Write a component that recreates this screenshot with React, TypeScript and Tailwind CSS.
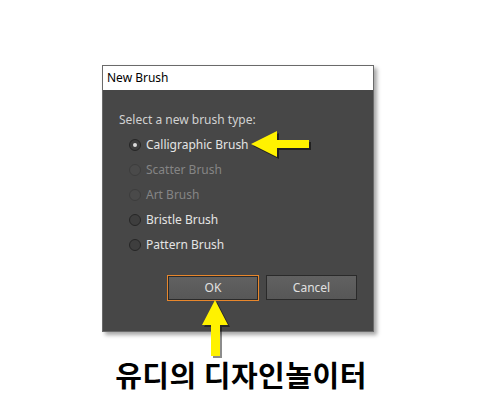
import React from "react";

const options = [
  { label: "Calligraphic Brush", checked: true, disabled: false },
  { label: "Scatter Brush", checked: false, disabled: true },
  { label: "Art Brush", checked: false, disabled: true },
  { label: "Bristle Brush", checked: false, disabled: false },
  { label: "Pattern Brush", checked: false, disabled: false },
];

function Radio({ checked, disabled }: { checked: boolean; disabled: boolean }) {
  return (
    <span
      className={`flex h-[12px] w-[12px] items-center justify-center rounded-full border ${
        disabled ? "border-[#3d3d3d] bg-[#4a4a4a]" : "border-[#262626] bg-[#3e3e3e]"
      }`}
    >
      {checked && <span className="h-[4px] w-[4px] rounded-full bg-[#dcdcdc]" />}
    </span>
  );
}

function LeftArrow() {
  return (
    <svg className="absolute left-[250px] top-[130px]" width="64" height="32" viewBox="0 0 64 32">
      <polygon points="3,16 29,3 29,12 61,12 61,20 29,20 29,29" fill="rgba(0,0,0,0.55)" />
      <polygon points="1,14 27,1 27,10 59,10 59,18 27,18 27,27" fill="#fff200" />
    </svg>
  );
}

function UpArrow() {
  return (
    <svg className="absolute left-[200px] top-[298px]" width="34" height="62" viewBox="0 0 34 62">
      <polygon points="17,4 30,29 22,29 22,60 13,60 13,29 4,29" fill="rgba(0,0,0,0.45)" />
      <polygon points="15,2 28,27 20,27 20,58 11,58 11,27 2,27" fill="#fff200" />
    </svg>
  );
}

export default function App() {
  return (
    <div
      className="relative h-[416px] w-[485px] bg-white"
      style={{ fontFamily: "'Noto Sans', 'Liberation Sans', sans-serif" }}
    >
      <div className="flex flex-col pt-[65px]">
        {/* Dialog */}
        <div className="ml-[102px] w-[272px] border border-[#6a6a6a] bg-[#474747] shadow-[3px_3px_4px_rgba(0,0,0,0.35)]">
          <div className="flex h-[24px] items-center bg-white pl-[4px] text-[12px] text-black">New Brush</div>
          <div className="flex flex-col pl-[16px] pr-[16px] pt-[17px] pb-[30px]">
            <div className="flex h-[25px] items-center text-[12px] text-[#d2d2d2]">Select a new brush type:</div>
            {options.map((o) => (
              <div key={o.label} className="flex h-[25px] items-center gap-[5px] pl-[10px]">
                <Radio checked={o.checked} disabled={o.disabled} />
                <span className={`text-[12px] ${o.disabled ? "text-[#858585]" : "text-[#e4e4e4]"}`}>{o.label}</span>
              </div>
            ))}
            <div className="mt-[18px] flex justify-end gap-[7px]">
              <button className="h-[26px] w-[92px] border border-[#e8872c] p-0">
                <span className="flex h-full w-full items-center justify-center border border-[#2a2a2a] bg-gradient-to-b from-[#616161] to-[#575757] text-[12px] text-[#e0e0e0]">
                  OK
                </span>
              </button>
              <button className="flex h-[25px] w-[91px] items-center justify-center border border-[#2a2a2a] bg-gradient-to-b from-[#616161] to-[#575757] text-[12px] text-[#e0e0e0]">
                Cancel
              </button>
            </div>
          </div>
        </div>

        {/* Caption */}
        <div
          className="mt-[24px] pr-[3px] text-center text-[29px] font-bold leading-[36px] tracking-[0.5px] text-black"
          style={{ fontFamily: "'Noto Sans CJK KR', 'Noto Sans', sans-serif" }}
        >
          유디의 디자인놀이터
        </div>
      </div>

      <LeftArrow />
      <UpArrow />
    </div>
  );
}
